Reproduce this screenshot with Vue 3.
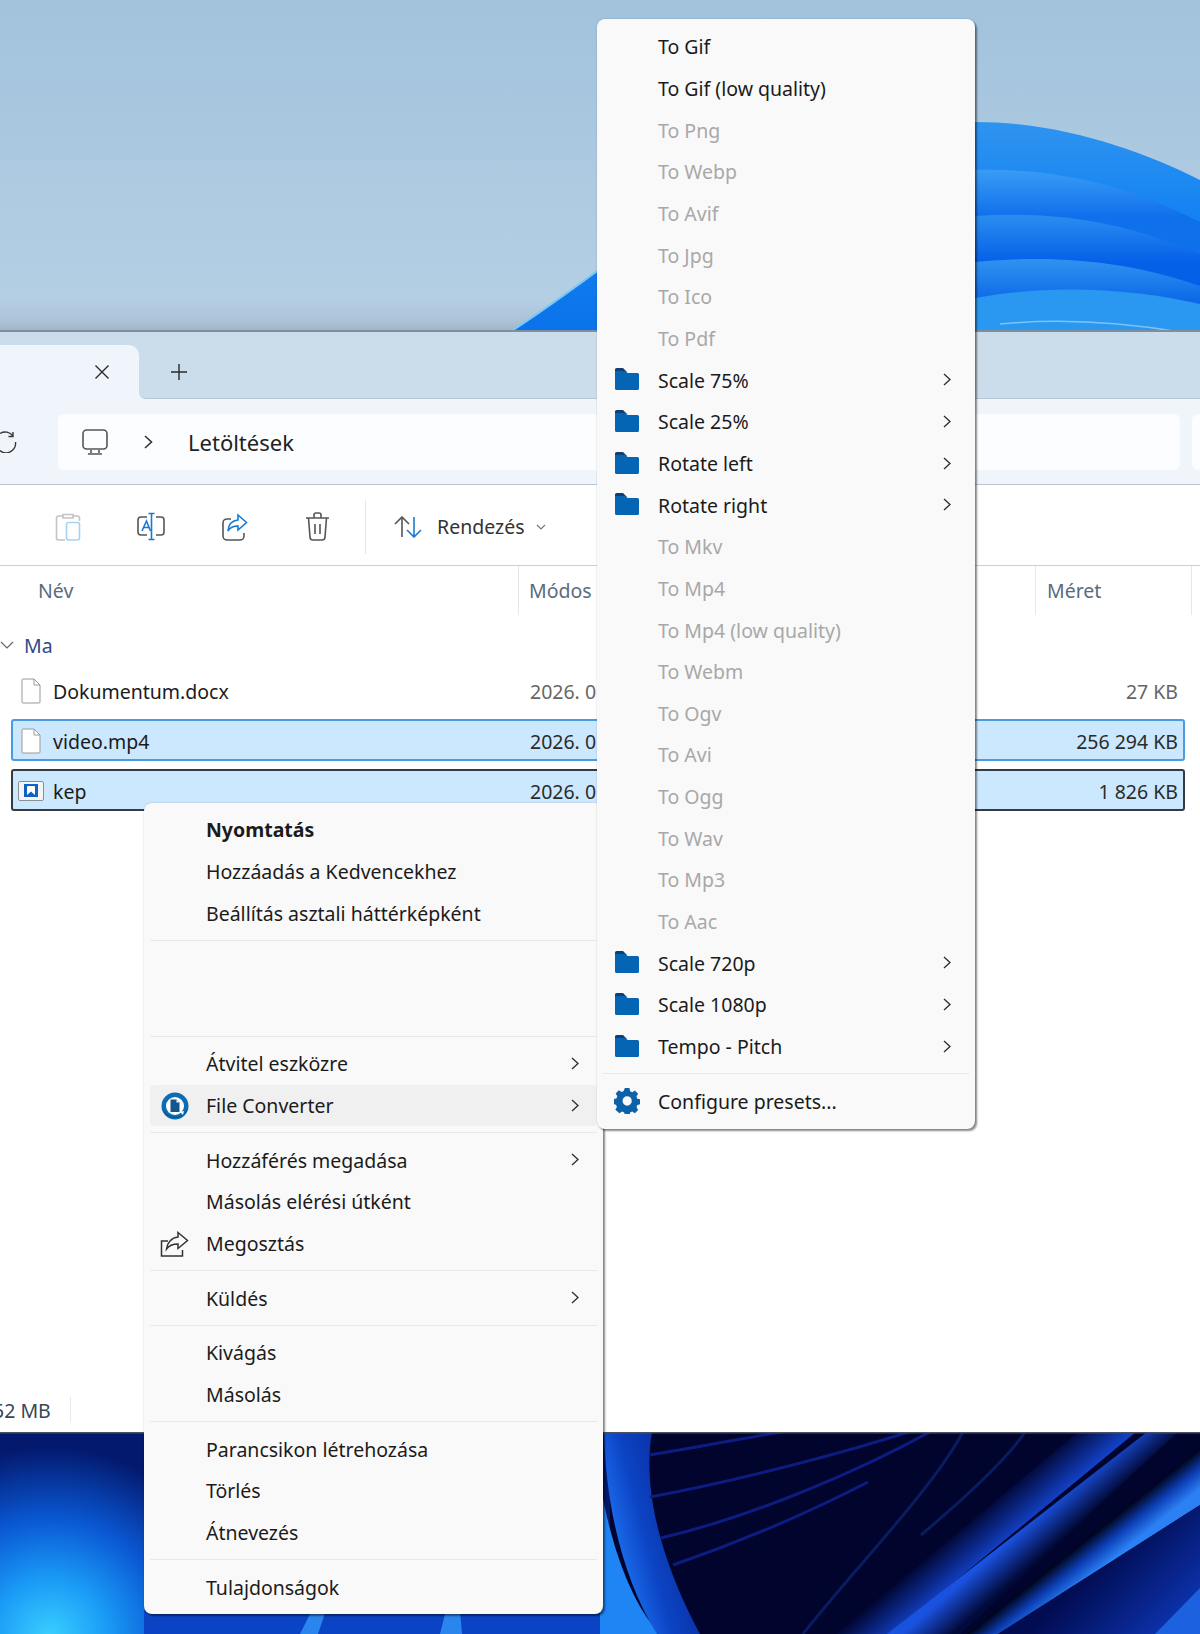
<script setup>
const files = [
  { name: 'Dokumentum.docx', date: '2026. 0', size: '27 KB', cls: '', icon: 'doc' },
  { name: 'video.mp4', date: '2026. 0', size: '256 294 KB', cls: 'selected', icon: 'doc' },
  { name: 'kep', date: '2026. 0', size: '1 826 KB', cls: 'selected focused', icon: 'image' }
]
const mainGroups = [
  [{ t: 'Nyomtatás', bold: true }, { t: 'Hozzáadás a Kedvencekhez' }, { t: 'Beállítás asztali háttérképként' }],
  [{ spacer: true }],
  [{ t: 'Átvitel eszközre', arrow: true }, { t: 'File Converter', arrow: true, hover: true, icon: 'fc' }],
  [{ t: 'Hozzáférés megadása', arrow: true }, { t: 'Másolás elérési útként' }, { t: 'Megosztás', icon: 'share' }],
  [{ t: 'Küldés', arrow: true }],
  [{ t: 'Kivágás' }, { t: 'Másolás' }],
  [{ t: 'Parancsikon létrehozása' }, { t: 'Törlés' }, { t: 'Átnevezés' }],
  [{ t: 'Tulajdonságok' }]
]
const d = (t) => ({ t, off: true })
const f = (t) => ({ t, arrow: true, icon: 'folder' })
const subItems = [
  { t: 'To Gif' }, { t: 'To Gif (low quality)' },
  d('To Png'), d('To Webp'), d('To Avif'), d('To Jpg'), d('To Ico'), d('To Pdf'),
  f('Scale 75%'), f('Scale 25%'), f('Rotate left'), f('Rotate right'),
  d('To Mkv'), d('To Mp4'), d('To Mp4 (low quality)'), d('To Webm'), d('To Ogv'), d('To Avi'), d('To Ogg'), d('To Wav'), d('To Mp3'), d('To Aac'),
  f('Scale 720p'), f('Scale 1080p'), f('Tempo - Pitch')
]
</script>

<template>
  <div class="screen">
    <svg class="wall wall-top" viewBox="0 0 1200 332" preserveAspectRatio="none">
      <defs>
        <linearGradient id="sky" x1="0" y1="0" x2="0" y2="1">
          <stop offset="0" stop-color="#a2c2dc" />
          <stop offset="0.9" stop-color="#b4cfe4" />
          <stop offset="0.965" stop-color="#adc3d7" />
          <stop offset="1" stop-color="#9fb3c6" />
        </linearGradient>
        <linearGradient id="b1" x1="0" y1="0" x2="0" y2="1">
          <stop offset="0" stop-color="#2f94f0" />
          <stop offset="0.4" stop-color="#1684f2" />
          <stop offset="1" stop-color="#0a72ea" />
        </linearGradient>
        <linearGradient id="b2" gradientUnits="userSpaceOnUse" x1="0" y1="170" x2="0" y2="216">
          <stop offset="0" stop-color="#3a9cf5" />
          <stop offset="1" stop-color="#0f70ec" />
        </linearGradient>
        <linearGradient id="b3" gradientUnits="userSpaceOnUse" x1="0" y1="216" x2="0" y2="262">
          <stop offset="0" stop-color="#2a8cf0" />
          <stop offset="1" stop-color="#0560e8" />
        </linearGradient>
        <linearGradient id="b4" gradientUnits="userSpaceOnUse" x1="0" y1="262" x2="0" y2="300">
          <stop offset="0" stop-color="#2d90f0" />
          <stop offset="1" stop-color="#0c6ae8" />
        </linearGradient>
      </defs>
      <rect width="1200" height="332" fill="url(#sky)" />
      <path d="M510 332C560 300 600 268 640 240C740 170 880 122 975 122C1060 122 1140 150 1200 180V332Z" fill="url(#b1)" />
      <path d="M510 332C560 300 600 268 640 240" stroke="#7cc8f4" stroke-width="2" fill="none" />
      <path d="M975 170C1060 168 1130 186 1200 222V332H975Z" fill="url(#b2)" />
      <path d="M975 216C1060 210 1130 224 1200 254V332H975Z" fill="url(#b3)" />
      <path d="M975 262C1060 254 1130 262 1200 286V332H975Z" fill="url(#b4)" />
      <path d="M975 298C1050 284 1130 288 1200 304V332H975Z" fill="#2a98f0" />
      <path d="M1000 324C1060 318 1120 322 1180 332" stroke="#7cc4f4" stroke-width="1.500" fill="none" />
      <rect y="330" width="1200" height="2" fill="#7f8e9c" />
    </svg>

    <div class="explorer">
      <div class="tabs">
        <div class="tab">
          <svg class="ico-close" viewBox="0 0 16 16"><path d="M1.500 1.500l13 13M14.500 1.500l-13 13" /></svg>
        </div>
        <div class="tab-rest">
          <svg class="ico-plus" viewBox="0 0 18 18"><path d="M9 1v16M1 9h16" /></svg>
        </div>
      </div>

      <div class="address">
        <svg class="ico-reload" viewBox="0 0 17 22"><path d="M0 2.500A9.500 9.500 0 0 1 13 5M13 1v4.500H8.500M15.500 11A9.500 9.500 0 0 1 0 19.500" /></svg>
        <div class="path">
          <svg class="ico-monitor" viewBox="0 0 26 26"><rect x="1" y="1" width="24" height="19" rx="3.500" /><path d="M9 21v3M17 21v3M6 25h14" /></svg>
          <svg class="ico-crumb" viewBox="0 0 9 14"><path d="M1 1l6.500 6L1 13" /></svg>
          <span class="crumb">Letöltések</span>
        </div>
        <div class="search"></div>
      </div>

      <div class="toolbar">
        <svg class="tool tool-paste" viewBox="0 0 26 29">
          <path d="M8 4H3.500A2 2 0 0 0 1.500 6v20a2 2 0 0 0 2 2H10M18 4h4.500a2 2 0 0 1 2 2v3M8 2.500h10v3.500H8z" stroke="#c4c4c4" />
          <rect x="11.500" y="10.500" width="13" height="17.500" rx="2" stroke="#a6d2f2" />
        </svg>
        <svg class="tool tool-rename" viewBox="0 0 28 29">
          <path d="M10 5H4a3 3 0 0 0-3 3v12a3 3 0 0 0 3 3h6M19 5h5a3 3 0 0 1 3 3v12a3 3 0 0 1-3 3h-5" stroke="#555" />
          <path d="M5 19l4.500-10 4 10M6.500 15.500h6" stroke="#1a7ad0" />
          <path d="M14.500 1.500v26M11.500 1.500h6M11.500 27.500h6" stroke="#1a7ad0" />
        </svg>
        <svg class="tool tool-share" viewBox="0 0 26 28">
          <path d="M9 6H5a4 4 0 0 0-4 4v13a4 4 0 0 0 4 4h13a4 4 0 0 0 4-4v-3" stroke="#555" />
          <path d="M16 2l8.500 7.500L16 17v-4c-5 0-8 1.500-10 5 .5-6 4-10.500 10-11z" stroke="#1a7ad0" />
        </svg>
        <svg class="tool tool-trash" viewBox="0 0 25 29">
          <path d="M1 6h23M9 6V3a2 2 0 0 1 2-2h3a2 2 0 0 1 2 2v3M3.500 6l1.500 19a3 3 0 0 0 3 3h9a3 3 0 0 0 3-3l1.500-19M10 12v10M15 12v10" stroke="#555" />
        </svg>
        <div class="tool-sep"></div>
        <svg class="tool tool-sort" viewBox="0 0 28 22">
          <path d="M8 21V1M1 8l7-7 7 7" stroke="#555" />
          <path d="M20 1v20M13 14l7 7 7-7" stroke="#1a7ad0" />
        </svg>
        <span class="sort-label">Rendezés</span>
        <svg class="ico-drop" viewBox="0 0 10 6"><path d="M1 1l4 4 4-4" /></svg>
      </div>

      <div class="columns">
        <div class="col col-name">Név</div>
        <div class="col col-date">Módos</div>
        <div class="col col-size">Méret</div>
      </div>

      <div class="list">
        <div class="group">
          <svg class="ico-group" viewBox="0 0 14 8"><path d="M1 1l6 6 6-6" /></svg>
          <span>Ma</span>
        </div>
        <div v-for="file in files" :key="file.name" class="file" :class="file.cls">
          <div class="file-name">
            <svg v-if="file.icon === 'doc'" class="ico-doc" viewBox="0 0 20 26">
              <path d="M1 2a1 1 0 0 1 1-1h11l6 6v17a1 1 0 0 1-1 1H2a1 1 0 0 1-1-1z" fill="#fff" stroke="#9a9a9a" />
              <path d="M13 1v6h6" fill="none" stroke="#9a9a9a" />
            </svg>
            <svg v-else class="ico-image" viewBox="0 0 26 20">
              <rect x="0.500" y="0.500" width="25" height="19" rx="1.500" fill="#f4f4f4" stroke="#8a8f94" />
              <rect x="6" y="3" width="14" height="13" fill="#0f62c0" />
              <path d="M9 14V6a1 1 0 0 1 1-1h6a1 1 0 0 1 1 1v8l-4-3.500z" fill="#fff" />
            </svg>
            <span>{{ file.name }}</span>
          </div>
          <div class="file-date">{{ file.date }}</div>
          <div class="file-size">{{ file.size }}</div>
        </div>
      </div>

      <div class="status">
        <span class="status-text">52 MB</span>
        <div class="status-sep"></div>
      </div>
    </div>

    <svg class="wall wall-bottom" viewBox="0 0 1200 202" preserveAspectRatio="none">
      <defs>
        <radialGradient id="glow" gradientUnits="userSpaceOnUse" cx="50" cy="205" r="190">
          <stop offset="0" stop-color="#3ad0ff" />
          <stop offset="0.3" stop-color="#1a9cf6" />
          <stop offset="0.62" stop-color="#0a58d4" />
          <stop offset="1" stop-color="#03196e" />
        </radialGradient>
        <linearGradient id="ring" gradientUnits="userSpaceOnUse" x1="615" y1="110" x2="690" y2="90">
          <stop offset="0" stop-color="#1a6cec" />
          <stop offset="0.4" stop-color="#0c44c4" />
          <stop offset="1" stop-color="#0a2a9c" />
        </linearGradient>
        <linearGradient id="rib1" gradientUnits="userSpaceOnUse" x1="971" y1="90" x2="995" y2="118">
          <stop offset="0" stop-color="#020a3c" />
          <stop offset="1" stop-color="#1240c4" />
        </linearGradient>
        <linearGradient id="rib2" gradientUnits="userSpaceOnUse" x1="1018" y1="100" x2="1040" y2="125">
          <stop offset="0" stop-color="#1a52e0" />
          <stop offset="1" stop-color="#020a3a" />
        </linearGradient>
        <linearGradient id="rib3" gradientUnits="userSpaceOnUse" x1="1100" y1="96" x2="1120" y2="121">
          <stop offset="0" stop-color="#000318" />
          <stop offset="0.5" stop-color="#0c3eb4" />
          <stop offset="1" stop-color="#2b80f4" />
        </linearGradient>
        <linearGradient id="rib4" gradientUnits="userSpaceOnUse" x1="1100" y1="130" x2="1170" y2="200">
          <stop offset="0" stop-color="#020c52" />
          <stop offset="1" stop-color="#0c34b0" />
        </linearGradient>
      </defs>
      <rect width="1200" height="202" fill="#01052e" />
      <rect width="610" height="202" fill="url(#glow)" />
      <rect x="144" y="178" width="460" height="24" fill="#0a44c4" />
      <path d="M300 202L312 178H326L318 202ZM440 202L446 178H460L462 202Z" fill="#2a86ee" />
      <path d="M600 50C610 110 630 170 660 202H600Z" fill="#1f84f4" />
      <path d="M604 0C606 80 625 150 657 202H700C672 150 640 70 652 0Z" fill="url(#ring)" />
      <path d="M650 23C720 12 790 -4 841 -8M650 65C740 48 850 20 933 -8M661 106C750 85 860 40 944 -8M673 133C740 110 810 80 868 50" fill="none" stroke="#0d1c80" stroke-width="3" />
      <path d="M803 202C860 130 930 60 963 0M921 103C960 70 1005 30 1025 0" fill="none" stroke="#0a1c60" stroke-width="3" />
      <path d="M1078 0H1136L891 202H837Z" fill="url(#rib1)" />
      <path d="M1147 0H1178L960 202H887Z" fill="url(#rib2)" />
      <path d="M1200 16V73L998 202H967Z" fill="url(#rib3)" />
      <path d="M1200 73V202H998Z" fill="url(#rib4)" />
      <path d="M1200 156V202H1155Z" fill="#1c62e0" />
      <rect width="1200" height="1.500" fill="#4a5160" />
    </svg>

    <div class="menu menu-main">
      <template v-for="(group, gi) in mainGroups" :key="gi">
        <div v-if="gi > 0" class="sep"></div>
        <template v-for="(item, ii) in group" :key="ii">
          <div v-if="item.spacer" class="spacer"></div>
          <div v-else class="item" :class="{ hover: item.hover, bold: item.bold }">
            <svg v-if="item.icon === 'fc'" class="ico-fc" viewBox="0 0 28 28">
              <circle cx="14" cy="14" r="13.500" fill="#0b6db4" />
              <path d="M1 16a13.500 13.500 0 0 0 26 0c-3 6-8 9-13 9S4 22 1 16z" fill="#123f6c" />
              <circle cx="14" cy="14" r="9" fill="#fff" />
              <path d="M9.500 7.500h6l3 3V20h-9z" fill="#14558e" />
              <path d="M15.500 7.500v3h3z" fill="#fff" />
              <path d="M19 20l4-1-1 4z" fill="#fff" />
            </svg>
            <svg v-else-if="item.icon === 'share'" class="ico-share" viewBox="0 0 29 26">
              <path d="M8 10H1.500v15h21v-6" />
              <path d="M18 1.500l9.500 8-9.500 8v-4.500c-5 0-9 1.500-11.500 5 .5-6 5-11.500 11.500-12z" />
            </svg>
            <span>{{ item.t }}</span>
            <svg v-if="item.arrow" class="ico-arrow" viewBox="0 0 8 13"><path d="M1 1l6 5.500L1 12" /></svg>
          </div>
        </template>
      </template>
    </div>

    <div class="menu menu-sub">
      <div v-for="item in subItems" :key="item.t" class="item" :class="{ off: item.off }">
        <svg v-if="item.icon === 'folder'" class="ico-folder" viewBox="0 0 24 22">
          <path d="M0 1.500A1.500 1.500 0 0 1 1.500 0H8l4 4H0z" fill="#123f73" />
          <path d="M0 3h10.500l2 2H22.500A1.500 1.500 0 0 1 24 6.500v14A1.500 1.500 0 0 1 22.500 22h-21A1.500 1.500 0 0 1 0 20.500z" fill="#0565b5" />
        </svg>
        <span>{{ item.t }}</span>
        <svg v-if="item.arrow" class="ico-arrow" viewBox="0 0 8 13"><path d="M1 1l6 5.500L1 12" /></svg>
      </div>
      <div class="sep"></div>
      <div class="item">
        <svg class="ico-gear" viewBox="0 0 26 26">
          <path fill-rule="evenodd" fill="#0b62a8" d="M10.500 0h5l.7 3.300 2.300 1 2.900-1.800 3.500 3.500-1.800 2.900 1 2.300 3.300.7v5l-3.300.7-1 2.300 1.800 2.900-3.500 3.500-2.900-1.800-2.300 1-.7 3.300h-5l-.7-3.300-2.300-1-2.900 1.800L.100 22.600l1.800-2.900-1-2.300L-2 16.700v-5l3.300-.7 1-2.300L.500 5.800 4 2.300l2.900 1.800 2.300-1z M13 8.500a5 5 0 1 0 0 10 5 5 0 0 0 0-10z" transform="translate(1.200 0) scale(.92 .96)" />
        </svg>
        <span>Configure presets...</span>
      </div>
    </div>
  </div>
</template>

<style scoped>
.screen {
  position: relative;
  width: 1200px;
  height: 1634px;
  overflow: hidden;
  font-family: "Noto Sans", "Open Sans", sans-serif;
  font-size: 19.5px;
  color: #1b1b1b;
  background: #fff;
}
.wall { display: block; width: 1200px; }
.wall-top { height: 332px; }
.wall-bottom { height: 202px; }

.explorer {
  display: flex;
  flex-direction: column;
  height: 1100px;
  background: #fff;
}
.tabs {
  display: flex;
  align-items: flex-end;
  height: 67px;
  background: linear-gradient(#cbdcea 80%, #eff5fa 80%);
  flex: none;
}
.tab {
  display: flex;
  align-items: center;
  justify-content: flex-end;
  width: 139px;
  height: 54px;
  padding-right: 29px;
  box-sizing: border-box;
  background: #eff5fa;
  border-top-right-radius: 10px;
  flex: none;
}
.tab-rest {
  display: flex;
  align-items: center;
  flex: 1;
  height: 100%;
  box-sizing: border-box;
  padding: 13px 0 0 31px;
  background: #cbdcea;
  border-bottom: 1px solid #b6c8d8;
  border-bottom-left-radius: 7px;
}
.ico-close { width: 16px; height: 16px; fill: none; stroke: #2a2a2a; stroke-width: 1.400; }
.ico-plus { width: 18px; height: 18px; fill: none; stroke: #2a2a2a; stroke-width: 1.400; }

.address {
  display: flex;
  align-items: center;
  height: 86px;
  flex: none;
  box-sizing: border-box;
  background: #eff5fa;
  border-bottom: 1px solid #b9c5d1;
}
.ico-reload { width: 17px; height: 22px; margin-right: 41px; flex: none; fill: none; stroke: #3a3a3a; stroke-width: 1.400; }
.path {
  display: flex;
  align-items: center;
  width: 1122px;
  height: 56px;
  flex: none;
  background: #fbfdfe;
  border-radius: 6px;
}
.ico-monitor { width: 26px; height: 26px; margin-left: 24px; flex: none; fill: none; stroke: #555; stroke-width: 1.600; }
.ico-crumb { width: 9px; height: 14px; margin-left: 36px; flex: none; fill: none; stroke: #333; stroke-width: 1.600; }
.crumb { margin-left: 35px; font-size: 22px; color: #222; }
.search {
  width: 10px;
  height: 56px;
  margin-left: 12px;
  background: #fbfdfe;
  border-radius: 6px 0 0 6px;
}

.toolbar {
  display: flex;
  align-items: center;
  height: 81px;
  flex: none;
  box-sizing: border-box;
  border-bottom: 1px solid #c6d0db;
  padding: 3px 0 0 55px;
}
.tool { flex: none; fill: none; stroke-width: 1.600; }
.tool-paste { width: 26px; height: 29px; }
.tool-rename { width: 28px; height: 29px; margin-left: 56px; }
.tool-share { width: 26px; height: 28px; margin-left: 57px; }
.tool-trash { width: 25px; height: 29px; margin-left: 57px; }
.tool-sep { width: 1px; height: 54px; margin-left: 35px; background: #e6e9ec; flex: none; }
.tool-sort { width: 28px; height: 22px; margin-left: 28px; }
.sort-label { margin-left: 15px; color: #333; }
.ico-drop { width: 10px; height: 6px; margin-left: 12px; fill: none; stroke: #777; stroke-width: 1.200; }

.columns {
  display: flex;
  height: 49px;
  flex: none;
  color: #5a6b7e;
}
.col {
  display: flex;
  align-items: center;
  box-sizing: border-box;
  height: 100%;
  border-right: 1px solid #e5e8eb;
}
.col-name { width: 519px; padding-left: 38px; }
.col-date { width: 517px; padding-left: 10px; }
.col-size { width: 156px; padding-left: 11px; }

.list { flex: 1; display: flex; flex-direction: column; }
.group {
  display: flex;
  align-items: center;
  height: 40px;
  margin-top: 10px;
  margin-bottom: 4px;
  color: #2f4a8c;
}
.ico-group { width: 14px; height: 8px; margin-right: 10px; fill: none; stroke: #666; stroke-width: 1.200; }
.file {
  display: flex;
  align-items: center;
  box-sizing: border-box;
  height: 42px;
  margin: 0 15px 8px 11px;
  padding: 2px 5px 0 8px;
  border: 2px solid transparent;
  border-radius: 3px;
  color: #666;
}
.file-name { display: flex; align-items: center; width: 509px; flex: none; color: #1b1b1b; }
.file-name span { margin-left: 12px; }
.file-date { flex: 1; }
.file-size { text-align: right; }
.selected { background: #cce8ff; border-color: #4b9be0; color: #2b2b2b; }
.focused { border-color: #333c44; }
.ico-doc { width: 20px; height: 26px; flex: none; }
.ico-image { width: 26px; height: 20px; margin-left: -3px; margin-right: -3px; flex: none; }

.status {
  display: flex;
  align-items: center;
  height: 44px;
  flex: none;
  color: #3a4656;
}
.status-text { margin-left: -7px; white-space: nowrap; }
.status-sep { width: 1px; height: 26px; margin-left: 19px; background: #e8ebee; }

.menu {
  position: absolute;
  box-sizing: border-box;
  display: flex;
  flex-direction: column;
  background: #f9f9f9;
  border-radius: 8px;
  box-shadow: 2px 2px 2px rgba(0, 0, 0, .45), 0 0 2px rgba(0, 0, 0, .2);
}
.menu-main { left: 144px; top: 803px; width: 459px; height: 811px; padding: 6px; }
.menu-sub { left: 597px; top: 19px; width: 378px; height: 1110px; padding: 7px 6px 0; z-index: 2; }
.item {
  position: relative;
  display: flex;
  align-items: center;
  height: 41.670px;
  flex: none;
  box-sizing: border-box;
  border-radius: 4px;
}
.menu-main .item { padding-left: 56px; }
.menu-sub .item { padding-left: 55px; }
.spacer { height: 83px; flex: none; }
.sep { height: 1px; flex: none; margin: 6px 0; background: #e9e9e9; }
.hover { background: #f0f0f0; }
.bold { font-weight: 700; }
.off { color: #a8a8a8; }
.ico-arrow {
  position: absolute;
  right: 18px;
  top: 14px;
  width: 8px;
  height: 13px;
  fill: none;
  stroke: #2c2c2c;
  stroke-width: 1.300;
}
.ico-fc { position: absolute; left: 11px; top: 7px; width: 28px; height: 28px; }
.ico-share { position: absolute; left: 10px; top: 8px; width: 29px; height: 26px; fill: none; stroke: #333; stroke-width: 1.500; }
.ico-folder { position: absolute; left: 12px; top: 9px; width: 24px; height: 22px; }
.ico-gear { position: absolute; left: 11px; top: 8px; width: 26px; height: 26px; }
</style>
